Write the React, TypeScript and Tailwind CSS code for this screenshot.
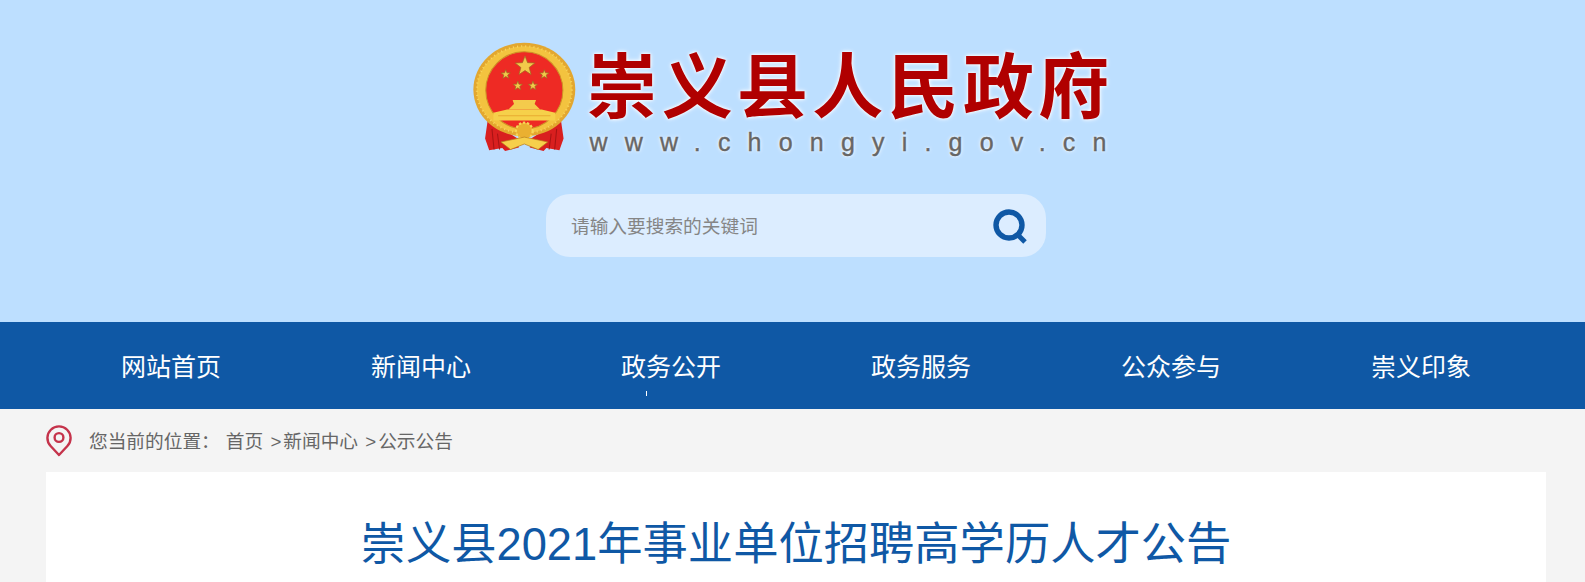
const NAV = ["网站首页", "新闻中心", "政务公开", "政务服务", "公众参与", "崇义印象"];

function Star({ x, y, r }: { x: number; y: number; r: number }) {
  const pts = Array.from({ length: 10 }, (_, i) => {
    const a = (-90 + i * 36) * (Math.PI / 180);
    const d = i % 2 === 0 ? r : r * 0.42;
    return `${x + d * Math.cos(a)},${y + d * Math.sin(a)}`;
  }).join(" ");
  return <polygon points={pts} fill="#f2c94a" stroke="#9c6a22" strokeWidth="2" />;
}

function Emblem() {
  return (
    <svg viewBox="40 35 305 325" className="w-[105px] h-[112px] shrink-0">
      {/* ribbons */}
      <path d="M86 262 L130 292 L176 320 L176 344 L136 354 L128 346 L90 352 L78 318 Z" fill="#d91f1f" />
      <path d="M298 262 L254 292 L208 320 L208 344 L248 354 L256 346 L294 352 L306 318 Z" fill="#d91f1f" />
      <path d="M98 290 L104 350 M114 304 L120 350 M286 290 L280 350 M270 304 L264 350" stroke="#a81414" strokeWidth="3" />
      {/* wreath */}
      <ellipse cx="192" cy="176" rx="148" ry="136" fill="#e3a72f" />
      <ellipse cx="192" cy="176" rx="138" ry="126" fill="#f3c33f" stroke="#f8d65f" strokeWidth="6" strokeDasharray="3 9" />
      <circle cx="192" cy="178" r="112" fill="#ee2a24" stroke="#cf9026" strokeWidth="3" />
      {/* stars */}
      <Star x={194} y={108} r={30} />
      <Star x={138} y={132} r={14} />
      <Star x={250} y={132} r={14} />
      <Star x={173} y={165} r={14} />
      <Star x={217} y={165} r={14} />
      {/* gate */}
      <path d="M158 206 L226 206 L222 218 L238 234 L146 234 L162 218 Z" fill="#f4cb4c" />
      <path d="M142 234 H242 L282 243 V266 H102 V243 Z" fill="#f6d04a" />
      <path d="M116 252 H268" stroke="#e8ab30" strokeWidth="3" />
      {/* gear and wheat at the foot */}
      <circle cx="192" cy="296" r="24" fill="#eab031" stroke="#f7d659" strokeWidth="6" strokeDasharray="7 5" />
      <path d="M124 328 L192 314 L260 328 L232 350 L192 334 L152 350 Z" fill="#f6cf4b" stroke="#b57a1c" strokeWidth="2" />
    </svg>
  );
}

function PinIcon() {
  return (
    <svg viewBox="0 0 26 33" className="w-[26px] h-[33px] shrink-0" fill="none" stroke="#c5334b">
      <path d="M13 31 L4.6 22 A11.6 11.6 0 1 1 21.4 22 Z" strokeWidth="2.4" strokeLinejoin="round" />
      <circle cx="13" cy="13.5" r="4.4" strokeWidth="2.4" />
    </svg>
  );
}

function SearchIcon() {
  return (
    <svg viewBox="0 0 36 36" className="w-9 h-9" fill="none" stroke="#0f58a5">
      <circle cx="17" cy="17" r="13" strokeWidth="5.4" />
      <path d="M26 27 L33 34" strokeWidth="5" />
    </svg>
  );
}

export default function App() {
  return (
    <div className="h-[582px] overflow-hidden bg-[#f4f4f4] font-['Liberation_Sans','Noto_Sans_CJK_SC',sans-serif]">
      <div className="w-[1592px]">
        <header className="h-[322px] bg-[#bddfff] pt-[41px]">
          <div className="flex justify-center pl-[4px]">
            <Emblem />
            <div className="ml-[9px] flex flex-col">
              <h1 className="mt-[9px] h-[75px] text-[71px] leading-[75px] tracking-[4.3px] font-bold text-[#b00000] whitespace-nowrap [text-shadow:0_0_5px_#fff,0_0_3px_#fff]">
                崇义县人民政府
              </h1>
              <div className="mt-[3px] text-[25px] leading-[28px] tracking-[17.2px] pl-[3px] text-[#666] whitespace-nowrap [-webkit-text-stroke:0.4px_#666] [text-shadow:0_0_4px_#fff,0_0_2px_#fff]">
                www.chongyi.gov.cn
              </div>
            </div>
          </div>
          <div className="mt-[38px] mx-auto w-[500px] h-[63px] rounded-[24px] bg-[#dcedff] flex items-center justify-between pl-[25px] pr-[18px]">
            <span className="pt-[3px] text-[18.7px] text-[#858585]">请输入要搜索的关键词</span>
            <SearchIcon />
          </div>
        </header>

        <nav className="h-[87px] bg-[#0f58a5]">
          <ul className="w-[1500px] mx-auto grid grid-cols-6 h-full">
            {NAV.map((item, i) => (
              <li key={item} className="relative flex items-center justify-center pt-[4px] text-[25px] text-white">
                {item}
                {i === 2 && <span className="absolute left-[100px] top-[69px] w-px h-[5px] bg-white" />}
              </li>
            ))}
          </ul>
        </nav>

        <main className="w-[1500px] mx-auto">
          <div className="h-[63px] flex items-center gap-[17px] text-[18.7px] text-[#666]">
            <PinIcon />
            <div className="whitespace-nowrap pt-[3px]">
              <span>您当前的位置：</span>
              <span className="ml-[6px]">首页</span>
              <span className="ml-[2px]"> &gt;</span>
              <span className="ml-[2px]">新闻中心</span>
              <span className="ml-[2px]"> &gt;</span>
              <span className="ml-[2px]">公示公告</span>
            </div>
          </div>
          <section className="bg-white pt-[42px] h-[200px]">
            <h2 className="text-center text-[45.3px] leading-[62px] text-[#0f58a5]">
              崇义县2021年事业单位招聘高学历人才公告
            </h2>
          </section>
        </main>
      </div>
    </div>
  );
}
